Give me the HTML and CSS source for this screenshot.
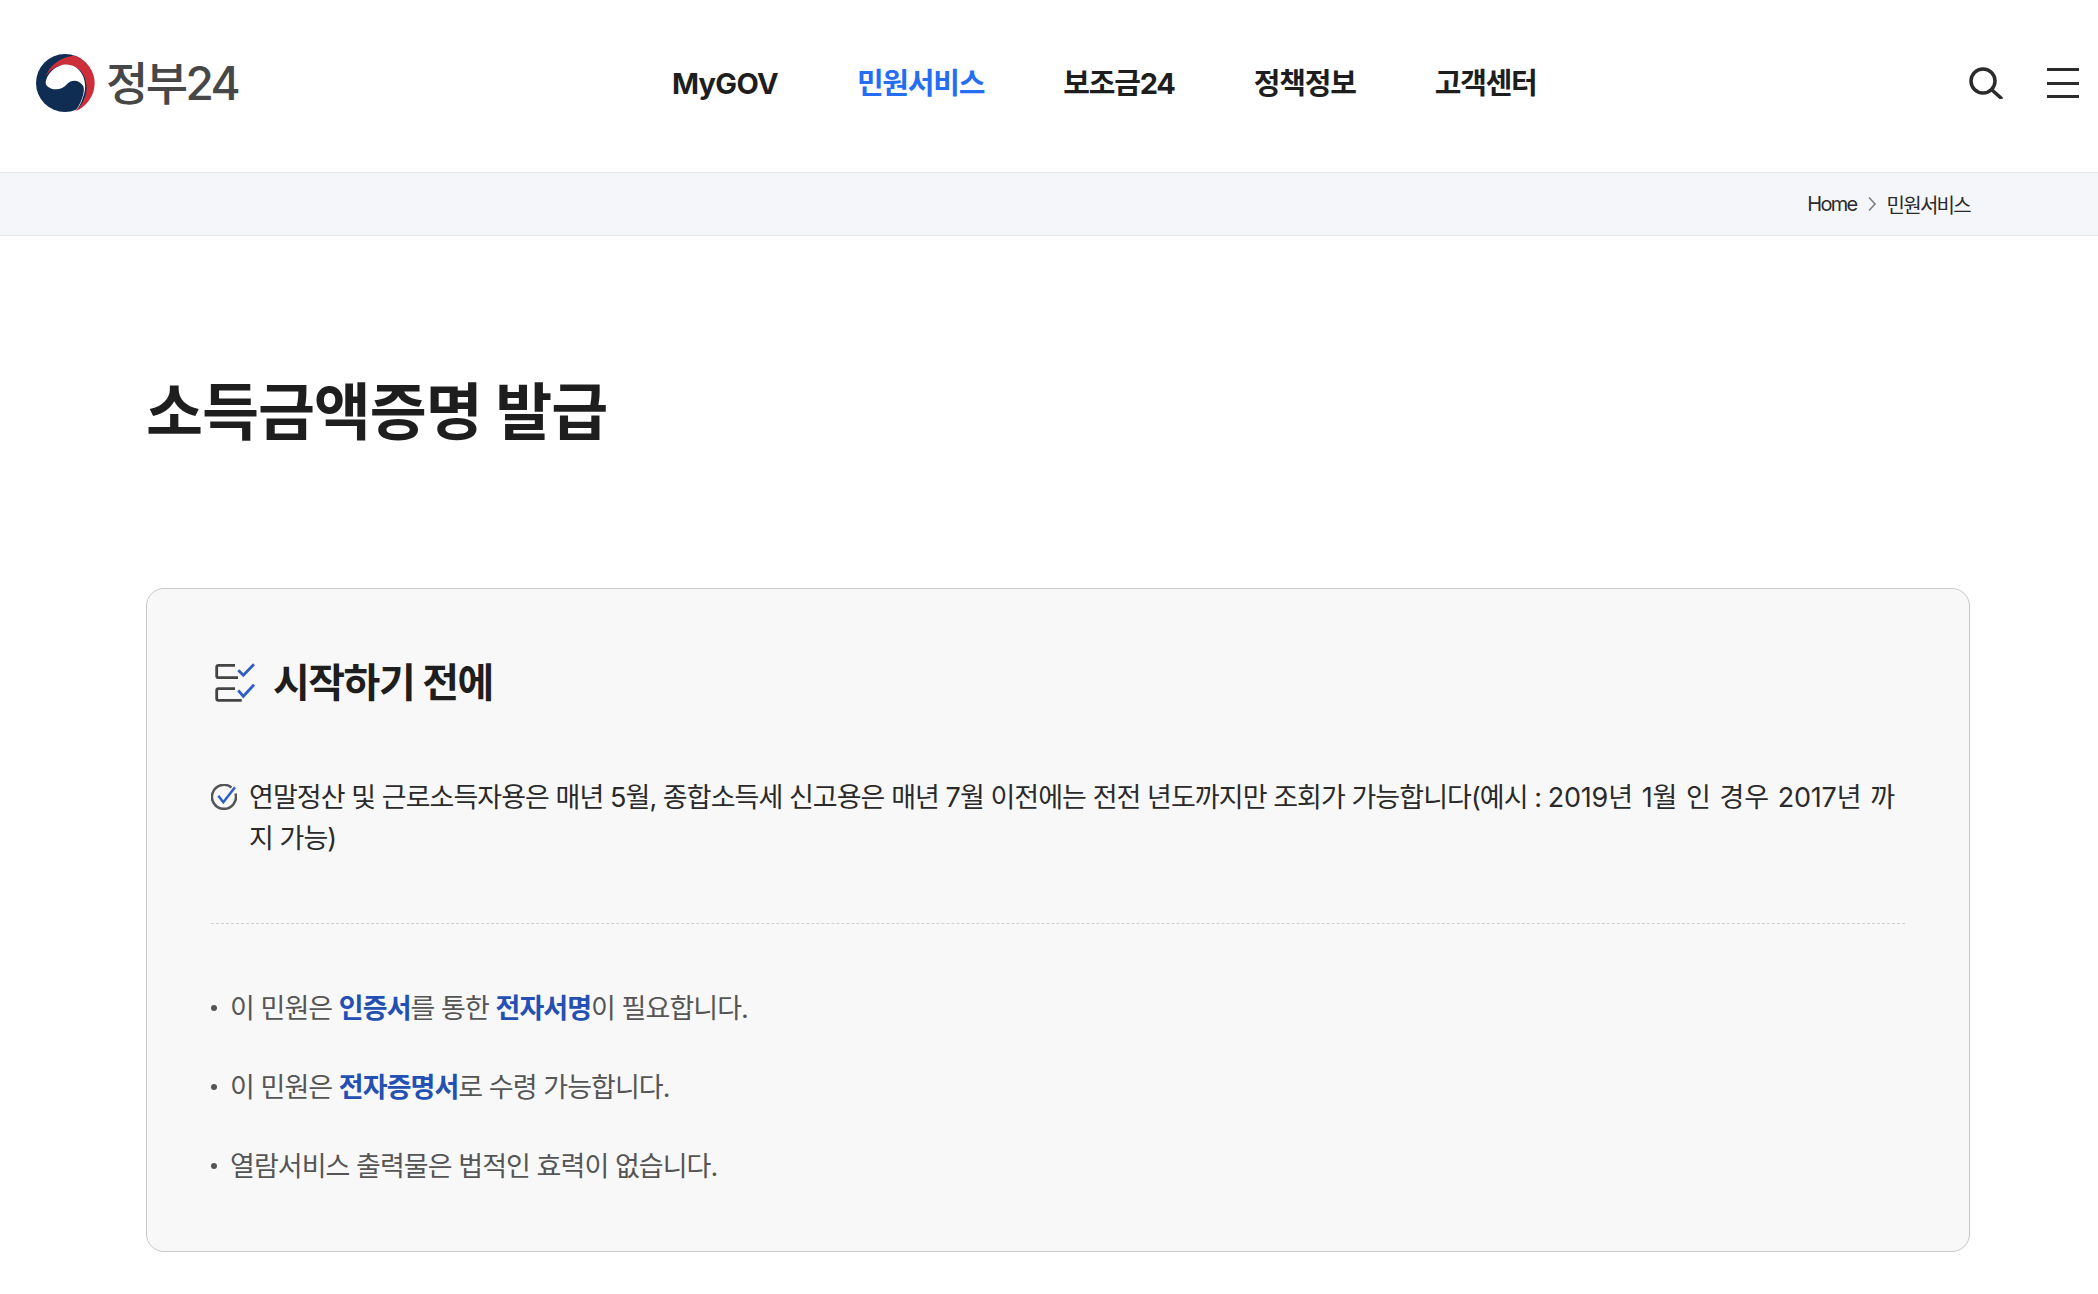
FILE: index.html
```html
<!DOCTYPE html>
<html lang="ko">
<head>
<meta charset="utf-8">
<title>소득금액증명 발급</title>
<link rel="stylesheet" href="styles.css">
</head>
<body>
<header class="header">
  <a class="logo">
    <svg class="logo-mark" viewBox="105 70 180 180" width="60" height="60">
      <circle cx="195" cy="160" r="87" fill="#0f2c52"/>
      <path d="M138 140C150 100 195 78 228 78C262 95 284 125 284 160C284 200 258 232 226 245C262 210 268 170 250 135C230 100 170 90 138 140Z" fill="#cd2e3a"/>
      <path d="M137 160C140 125 180 100 205 105C250 110 265 165 250 200C245 220 235 235 226 245C240 225 257 190 250 170C240 150 215 148 202 162C190 178 170 182 155 177C145 173 137 168 137 160Z" fill="#fff"/>
    </svg>
    <span class="logo-text">정부24</span>
  </a>
  <nav class="nav">
    <a class="nav-item nav-latin">MyGOV</a>
    <a class="nav-item nav-active">민원서비스</a>
    <a class="nav-item">보조금24</a>
    <a class="nav-item">정책정보</a>
    <a class="nav-item">고객센터</a>
  </nav>
  <div class="tools">
    <svg class="tool-search" viewBox="0 0 34 32" width="34" height="32" fill="none" stroke="#2b2b2b" stroke-width="3.500">
      <circle cx="14" cy="14" r="12"/>
      <path d="M23 23L32 31" stroke-linecap="round"/>
    </svg>
    <div class="burger"><span></span><span></span><span></span></div>
  </div>
</header>
<div class="crumbs">
  <div class="crumbs-in">
    <span>Home</span>
    <svg viewBox="0 0 10 16" width="10" height="16" fill="none" stroke="#7d7d8c" stroke-width="1.600"><path d="M2 1.500L8 8L2 14.500"/></svg>
    <span>민원서비스</span>
  </div>
</div>
<main class="main">
  <h1 class="title">소득금액증명 발급</h1>
  <section class="card">
    <h2 class="card-title">
      <svg viewBox="0 0 40 40" width="40" height="40" fill="none" stroke-width="2.800">
        <path d="M20 2.300H3.500Q1.700 2.300 1.700 4V13Q1.700 14.700 3.500 14.700H23" stroke="#444"/>
        <path d="M20 25.700H3.500Q1.700 25.700 1.700 27.500V35.500Q1.700 37.300 3.500 37.300H26.700" stroke="#444"/>
        <path d="M23.300 7.300L28.300 12.300L39 1.300" stroke="#2f5fc4"/>
        <path d="M23.300 27.300L28.300 33.300L39 21.700" stroke="#2f5fc4"/>
      </svg>
      시작하기 전에
    </h2>
    <div class="check">
      <svg viewBox="0 0 26 26" width="26" height="26" fill="none">
        <path d="M20.500 3.500A12 12 0 1 0 24.500 9.500" stroke="#555" stroke-width="2.500"/>
        <path d="M7.300 11.700L12.300 18.300L24 3.300" stroke="#2f5fc4" stroke-width="2.500"/>
      </svg>
      <p>연말정산 및 근로소득자용은 매년 5월, 종합소득세 신고용은 매년 7월 이전에는 전전 년도까지만 조회가 가능합니다(예시 : <span class="ex">2019년 1월 인 경우 2017년 까</span>지 가능)</p>
    </div>
    <ul class="notes">
      <li>이 민원은 <b>인증서</b>를 통한 <b>전자서명</b>이 필요합니다.</li>
      <li>이 민원은 <b>전자증명서</b>로 수령 가능합니다.</li>
      <li>열람서비스 출력물은 법적인 효력이 없습니다.</li>
    </ul>
  </section>
</main>
</body>
</html>
```
FILE: styles.css
```css
* { box-sizing: border-box; }
html, body { margin: 0; padding: 0; }
body { font-family: "Inter", "Noto Sans CJK KR", sans-serif; color: #1e1e1e; background: #fff; height: 1294px; overflow: hidden; }
.header { height: 172px; display: flex; align-items: center; padding: 0 19px 6px 35px; position: relative; }
.logo { display: flex; align-items: center; gap: 11px; }
.logo-mark { display: block; }
.logo-text { font-size: 46px; font-weight: 500; color: #474747; letter-spacing: -2.6px; line-height: 1; }
.nav { position: absolute; left: 672px; top: 62px; display: flex; gap: 79px; }
.nav-item { font-size: 29px; font-weight: 700; letter-spacing: -1.2px; line-height: 44px; color: #1e1e1e; }
.nav-latin { letter-spacing: -0.7px; }
.nav-active { color: #256ef4; }
.tools { margin-left: auto; display: flex; align-items: center; gap: 44px; }
.tool-search { display: block; }
.burger { width: 32px; height: 30px; display: flex; flex-direction: column; justify-content: space-between; }
.burger span { display: block; height: 3px; background: #2b2b2b; }
.crumbs { height: 64px; background: #f5f6fa; border-top: 1px solid #e6e8ee; border-bottom: 1px solid #e6e8ee; display: flex; justify-content: flex-end; padding-right: 128px; }
.crumbs-in { display: flex; align-items: center; gap: 10px; font-size: 20px; letter-spacing: -1.7px; color: #2a2a2a; }
.main { padding: 0 128px 0 146px; }
.title { margin: 0; padding-top: 139px; font-size: 62px; line-height: 76px; font-weight: 700; letter-spacing: -1.1px; color: #1e1e1e; }
.card { margin-top: 137px; height: 664px; border: 1.500px solid #c8c8c8; border-radius: 18px; background: #f8f8f8; padding: 64px 64px 0; }
.card-title { display: flex; align-items: center; gap: 18px; margin: 0; padding-left: 4px; font-size: 40px; line-height: 60px; font-weight: 700; letter-spacing: -1.5px; color: #1e1e1e; }
.check { display: flex; gap: 12px; margin-top: 64px; padding-bottom: 64px; border-bottom: 1.500px dashed #cfcfcf; }
.check svg { flex: none; margin-top: 7px; }
.check p { margin: 0; font-size: 27px; line-height: 41px; letter-spacing: -0.95px; color: #2a2a2a; }
.ex { letter-spacing: -0.2px; word-spacing: 1.5px; }
.notes { list-style: none; margin: 65px 0 0; padding: 0; display: flex; flex-direction: column; gap: 40px; }
.notes li { position: relative; padding-left: 19px; font-size: 27px; line-height: 39px; letter-spacing: -0.95px; color: #555; }
.notes li::before { content: ""; position: absolute; left: 0; top: 16px; width: 6px; height: 6px; border-radius: 50%; background: #555; }
.notes b { font-weight: 700; color: #2450b4; }
```
